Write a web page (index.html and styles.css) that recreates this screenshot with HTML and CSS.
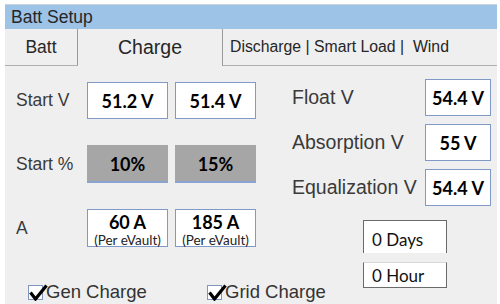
FILE: index.html
```html
<!DOCTYPE html>
<html lang="en">
<head>
    <meta charset="UTF-8">
    <meta name="viewport" content="width=device-width, initial-scale=1.0">
    <title>Batt Setup - Charge</title>
    <link rel="stylesheet" href="styles.css">
</head>
<body>
    <div class="panel">
        <div class="title">Batt Setup</div>

        <div class="tabs">
            <div class="tab tab-batt">Batt</div>
            <div class="tab tab-charge">Charge</div>
            <div class="tab tab-more">Discharge | Smart Load |&nbsp; Wind</div>
        </div>

        <div class="content">
            <div class="col-left">
                <div class="row">
                    <span class="label">Start V</span>
                    <div class="box">51.2 V</div>
                    <div class="box">51.4 V</div>
                </div>
                <div class="row row-pct">
                    <span class="label">Start %</span>
                    <div class="box box-gray">10%</div>
                    <div class="box box-gray">15%</div>
                </div>
                <div class="row row-amp">
                    <span class="label">A</span>
                    <div class="box box-amp">
                        <span class="amp">60 A</span>
                        <span class="per">(Per eVault)</span>
                    </div>
                    <div class="box box-amp">
                        <span class="amp">185 A</span>
                        <span class="per">(Per eVault)</span>
                    </div>
                </div>

                <div class="checks">
                    <label class="check">
                        <span class="check-box">
                            <svg class="tick" width="19" height="17" viewBox="0 0 19 17">
                                <path d="M1.5 8.5 L6.5 15 L17.5 1.5" fill="none" stroke="#000" stroke-width="3.2" stroke-linejoin="miter"/>
                            </svg>
                        </span>
                        Gen Charge
                    </label>
                    <label class="check">
                        <span class="check-box">
                            <svg class="tick" width="19" height="17" viewBox="0 0 19 17">
                                <path d="M1.5 8.5 L6.5 15 L17.5 1.5" fill="none" stroke="#000" stroke-width="3.2" stroke-linejoin="miter"/>
                            </svg>
                        </span>
                        Grid Charge
                    </label>
                </div>
            </div>

            <div class="col-right">
                <div class="rrow">
                    <span class="rlabel">Float V</span>
                    <div class="box box-small">54.4 V</div>
                </div>
                <div class="rrow">
                    <span class="rlabel">Absorption V</span>
                    <div class="box box-small">55 V</div>
                </div>
                <div class="rrow">
                    <span class="rlabel">Equalization V</span>
                    <div class="box box-small">54.4 V</div>
                </div>

                <div class="period period-days">0 Days</div>
                <div class="period period-hour">0 Hour</div>
            </div>
        </div>
    </div>
</body>
</html>
```

FILE: styles.css
```css
* {
    margin: 0;
    padding: 0;
    box-sizing: border-box;
}

body {
    font-family: 'Liberation Sans', Arial, sans-serif;
    background: white;
    color: #3a3a3a;
}

.panel {
    margin: 4px 3px 0 5px;
    height: 300px;
    background: #efefef;
}

.title {
    height: 25px;
    line-height: 25px;
    padding-left: 6px;
    background: #9dc3e6;
    border-top: 1px solid #c9d4de;
    font-size: 17.5px;
    color: #262626;
}

/* tab strip */
.tabs {
    display: flex;
    height: 37px;
}

.tab {
    display: flex;
    align-items: center;
    color: #262626;
}

.tab-batt {
    width: 73px;
    justify-content: center;
    font-size: 17.5px;
    border-right: 1px solid #9a9a9a;
    border-bottom: 1px solid #b0b0b0;
}

.tab-charge {
    width: 145px;
    justify-content: center;
    font-size: 19.5px;
    border-right: 1px solid #9a9a9a;
}

.tab-more {
    flex: 1;
    padding-left: 7px;
    font-size: 15.8px;
    border-bottom: 1px solid #b0b0b0;
    white-space: nowrap;
}

.content {
    display: flex;
}

/* left side */
.col-left {
    width: 275px;
    padding-top: 16px;
}

.row {
    display: flex;
    align-items: center;
    gap: 7px;
}

.row-pct {
    margin-top: 26px;
}

.row-amp {
    margin-top: 26px;
}

.label {
    width: 75px;
    padding-left: 11px;
    font-size: 17.5px;
    white-space: nowrap;
}

.box {
    width: 81px;
    height: 37px;
    display: flex;
    align-items: center;
    justify-content: center;
    background: white;
    border: 1px solid #7f9ac6;
    font-family: Lato, 'Open Sans', sans-serif;
    font-weight: 700;
    font-size: 18px;
    color: #000;
}

.box-gray {
    height: 38px;
    background: #a6a6a6;
    border: none;
    border-bottom: 2px solid #8aa4cf;
    padding-top: 2px;
}

.box-amp {
    height: 38px;
    flex-direction: column;
    justify-content: flex-start;
    padding-top: 2px;
}

.amp {
    line-height: 20px;
}

.per {
    font-weight: 400;
    font-size: 13.5px;
    line-height: 15px;
    margin-top: 1px;
    color: #222;
}

.checks {
    display: flex;
    margin-top: 34px;
    padding-left: 23px;
    white-space: nowrap;
}

.check {
    flex-shrink: 0;
    width: 179px;
    display: flex;
    align-items: center;
    gap: 3px;
    font-size: 18.5px;
    color: #333;
}

.check-box {
    position: relative;
    width: 15px;
    height: 15px;
    border: 1px solid #8096be;
    background: white;
}

.tick {
    position: absolute;
    left: 0;
    top: -2px;
}

/* right side */
.col-right {
    flex: 1;
    padding-top: 13px;
    padding-left: 12px;
}

.rrow {
    display: flex;
    align-items: center;
    height: 37px;
    margin-bottom: 8px;
}

.rlabel {
    width: 133px;
    font-size: 19.5px;
    white-space: nowrap;
}

.box-small {
    width: 66px;
}

.period {
    width: 84px;
    margin-left: 71px;
    padding-left: 8px;
    background: white;
    font-family: Lato, 'Open Sans', sans-serif;
    font-size: 17px;
    color: #111;
    display: flex;
    align-items: center;
}

.period-days {
    height: 33px;
    margin-top: 14px;
    padding-top: 4px;
    border: 1px solid #6b6b6b;
    border-bottom: none;
}

.period-hour {
    height: 26px;
    margin-top: 9px;
    border: 1px solid #6b6b6b;
    border-top-color: #d8d8d8;
}
```
